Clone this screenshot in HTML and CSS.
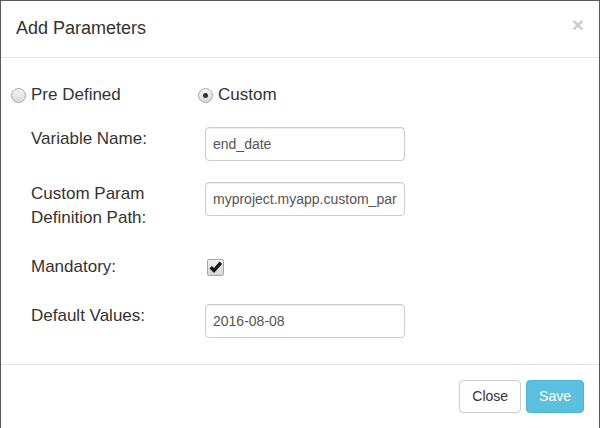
FILE: index.html
```html
<!DOCTYPE html>
<html lang="en">
<head>
<meta charset="utf-8">
<title>Add Parameters</title>
<link rel="stylesheet" href="styles.css">
</head>
<body>
<div class="modal-content">
  <div class="modal-header">
    <button type="button" class="close" aria-label="Close">&times;</button>
    <h4 class="modal-title">Add Parameters</h4>
  </div>
  <div class="modal-body">
    <div class="form-grid">
      <div class="radio-row">
        <label class="radio-label"><span class="radio"></span>Pre Defined</label>
        <label class="radio-label radio-custom"><span class="radio checked"></span>Custom</label>
      </div>
      <div class="form-row">
        <label class="field-label">Variable Name:</label>
        <div class="field"><input class="form-control" type="text" value="end_date"></div>
      </div>
      <div class="form-row">
        <label class="field-label">Custom Param<br>Definition Path:</label>
        <div class="field"><input class="form-control" type="text" value="myproject.myapp.custom_param"></div>
      </div>
      <div class="form-row">
        <label class="field-label">Mandatory:</label>
        <div class="field"><span class="checkbox"><svg viewBox="0 0 17 17" width="17" height="17"><path d="M2.4 9.2 L4.9 6.9 L7 9.1 L12.6 2.6 L15.1 4.9 L7 13.9 Z" fill="#1a1a1a"/></svg></span></div>
      </div>
      <div class="form-row">
        <label class="field-label">Default Values:</label>
        <div class="field"><input class="form-control" type="text" value="2016-08-08"></div>
      </div>
    </div>
  </div>
  <div class="modal-footer">
    <button type="button" class="btn btn-default">Close</button>
    <button type="button" class="btn btn-info">Save</button>
  </div>
</div>
</body>
</html>
```

FILE: styles.css
```css
html, body {
  margin: 0;
  padding: 0;
  height: 100%;
  overflow: hidden;
  background: #fff;
}

body {
  font-family: "Liberation Sans", Arial, sans-serif;
  font-size: 14px;
  line-height: 1.42857;
  color: #333;
}

.modal-content {
  box-sizing: border-box;
  width: 600px;
  min-height: 440px;
  border: 1px solid #5a5a5a;
  border-bottom: none;
  background: #fff;
}

.modal-header {
  padding: 15px;
  border-bottom: 1px solid #e5e5e5;
}

.modal-title {
  margin: 0;
  font-size: 18px;
  font-weight: 400;
  line-height: 1.42857;
  color: #333;
}

.close {
  float: right;
  margin-top: -2px;
  padding: 0;
  border: 0;
  background: transparent;
  font-family: "Liberation Sans", Arial, sans-serif;
  font-size: 21px;
  font-weight: 700;
  line-height: 1;
  color: #000;
  opacity: 0.2;
  cursor: pointer;
}

.modal-body {
  padding: 15px 15px 5px 30px;
}

.form-grid {
  display: flex;
  flex-direction: column;
}

.radio-row {
  display: grid;
  grid-template-columns: 174px 200px;
  margin-top: 10px;
  margin-bottom: 20px;
}

.radio-label {
  display: flex;
  align-items: center;
  gap: 5px;
  margin-left: -20px;
  font-size: 17px;
  line-height: 24px;
  color: #333;
}

.radio-custom {
  margin-left: -7px;
}

.radio {
  box-sizing: border-box;
  width: 15px;
  height: 15px;
  margin-top: 2px;
  border: 1px solid #a9a9a9;
  border-radius: 50%;
  background: linear-gradient(#f4f4f4, #d9d9d9);
  display: flex;
  align-items: center;
  justify-content: center;
}

.radio.checked::after {
  content: "";
  width: 5px;
  height: 5px;
  border-radius: 50%;
  background: #333;
}

.form-row {
  display: grid;
  grid-template-columns: 174px 200px;
  align-items: start;
  margin-bottom: 21px;
}

.field-label {
  font-size: 17px;
  line-height: 24.3px;
  padding-bottom: 3.5px;
  color: #333;
}

.form-control {
  box-sizing: border-box;
  display: block;
  width: 200px;
  height: 34px;
  padding: 6px 7px;
  border: 1px solid #ccc;
  border-radius: 4px;
  box-shadow: inset 0 1px 1px rgba(0, 0, 0, 0.075);
  font-family: "Liberation Sans", Arial, sans-serif;
  font-size: 14px;
  line-height: 20px;
  color: #555;
  background: #fff;
}

.checkbox {
  box-sizing: border-box;
  display: block;
  width: 17px;
  height: 17px;
  margin: 4px 0 0 2px;
  border: 1px solid #a6a6a6;
  border-radius: 2px;
  background: linear-gradient(#f2f2f2, #d6d6d6);
  overflow: hidden;
}

.checkbox svg {
  display: block;
  margin: -1px 0 0 -1px;
}

.modal-footer {
  display: flex;
  justify-content: flex-end;
  gap: 5px;
  padding: 15px;
  border-top: 1px solid #e5e5e5;
}

.btn {
  display: block;
  box-sizing: border-box;
  height: 33px;
  padding: 6px 12px;
  border: 1px solid transparent;
  border-radius: 4px;
  font-family: "Liberation Sans", Arial, sans-serif;
  font-size: 14px;
  line-height: 19px;
  cursor: pointer;
}

.btn-default {
  color: #333;
  background: #fff;
  border-color: #ccc;
}

.btn-info {
  color: #fff;
  background: #5bc0de;
  border-color: #46b8da;
}
```
